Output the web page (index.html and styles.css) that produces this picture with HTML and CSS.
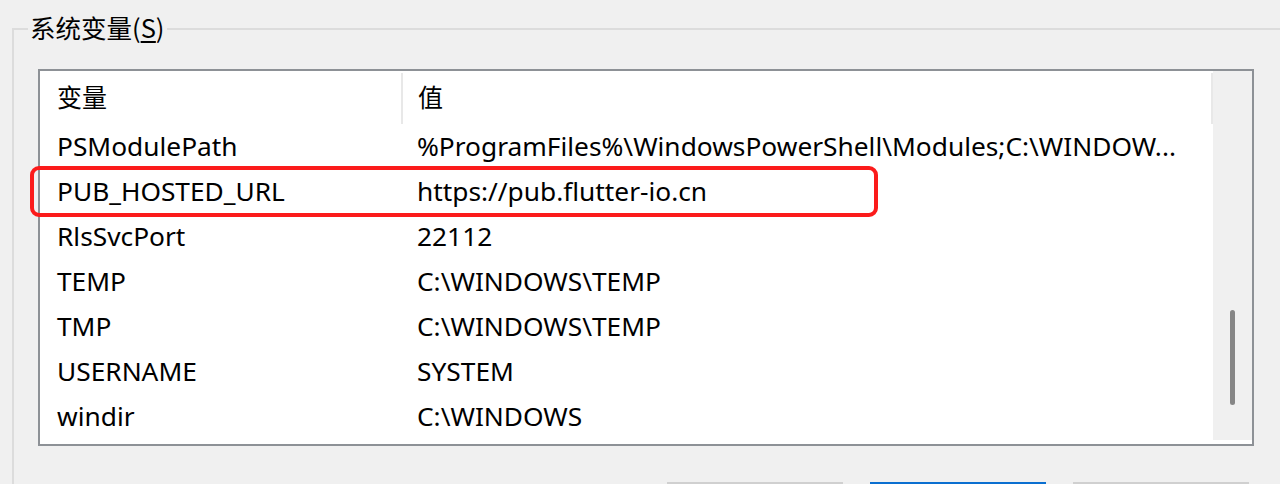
FILE: index.html
```html
<!DOCTYPE html>
<html lang="zh-CN">
<head>
<meta charset="utf-8">
<title>系统变量</title>
<link rel="stylesheet" href="styles.css">
</head>
<body>
<div class="group">
  <div class="legend">系统变量(<u>S</u>)</div>
  <div class="list">
    <div class="content">
      <div class="row head">
        <div class="c1">变量</div>
        <div class="c2">值</div>
      </div>
      <div class="row"><div class="c1">PSModulePath</div><div class="c2">%ProgramFiles%\WindowsPowerShell\Modules;C:\WINDOW...</div></div>
      <div class="row"><div class="c1">PUB_HOSTED_URL</div><div class="c2">https://pub.flutter-io.cn</div></div>
      <div class="row"><div class="c1">RlsSvcPort</div><div class="c2">22112</div></div>
      <div class="row"><div class="c1">TEMP</div><div class="c2">C:\WINDOWS\TEMP</div></div>
      <div class="row"><div class="c1">TMP</div><div class="c2">C:\WINDOWS\TEMP</div></div>
      <div class="row"><div class="c1">USERNAME</div><div class="c2">SYSTEM</div></div>
      <div class="row"><div class="c1">windir</div><div class="c2">C:\WINDOWS</div></div>
    </div>
    <div class="scrollbar"><div class="thumb"></div></div>
    <div class="highlight"></div>
  </div>
  <div class="buttons">
    <div class="btn"></div>
    <div class="btn primary"></div>
    <div class="btn"></div>
  </div>
</div>
</body>
</html>
```
FILE: styles.css
```css
html, body {
  margin: 0;
  padding: 0;
}
body {
  background: #f0f0f0;
  width: 1280px;
  height: 484px;
  overflow: hidden;
  font-family: "Noto Sans", "Noto Sans CJK SC", sans-serif;
  font-size: 26.3px;
  color: #000;
}
.group {
  margin: 28px 0 0 12px;
  width: 1320px;
  height: 456px;
  border-top: 2px solid #dcdcdc;
  border-left: 2px solid #dcdcdc;
  padding-left: 24px;
  box-sizing: border-box;
}
.legend {
  width: fit-content;
  margin: -21px 0 0 -10px;
  padding: 0 3px 0 2px;
  line-height: 36px;
  height: 36px;
  background: #f0f0f0;
  font-family: "Noto Sans CJK SC", "Noto Sans", sans-serif;
  font-size: 25.5px;
}
.legend u {
  text-decoration-thickness: 2px;
  text-underline-offset: 3px;
}
.list {
  position: relative;
  margin-top: 24px;
  width: 1216px;
  height: 377px;
  box-sizing: border-box;
  border: 2px solid #8d9196;
  background: #fff;
  display: flex;
}
.content {
  width: 1173px;
  display: flex;
  flex-direction: column;
}
.row {
  display: flex;
  height: 45px;
  align-items: center;
  white-space: nowrap;
  padding-bottom: 2px;
  box-sizing: border-box;
}
.row.head {
  height: 53px;
  padding-bottom: 0;
  font-family: "Noto Sans CJK SC", "Noto Sans", sans-serif;
  font-size: 25px;
}
.c1 {
  width: 345px;
  padding-left: 17px;
  flex: none;
}
.c2 {
  padding-left: 15px;
  flex: 1;
  overflow: hidden;
}
.row.head .c1,
.row.head .c2 {
  align-self: stretch;
  display: flex;
  align-items: center;
  margin-top: 2px;
  padding-bottom: 5px;
  border-right: 2px solid #e8e8e8;
}
.row.head .c1 {
  width: 344px;
}
.scrollbar {
  width: 39px;
  height: 369px;
  background: #f0f0f0;
  padding-top: 239px;
  box-sizing: border-box;
}
.thumb {
  margin-left: 17px;
  width: 5px;
  height: 95px;
  border-radius: 3px;
  background: #868686;
}
.highlight {
  position: absolute;
  left: -10px;
  top: 95px;
  width: 848px;
  height: 51px;
  box-sizing: border-box;
  border: 4px solid #fb1b1b;
  border-radius: 9px;
}
.buttons {
  display: flex;
  margin: 36px 0 0 629px;
  gap: 27px;
}
.btn {
  width: 176px;
  height: 46px;
  box-sizing: border-box;
  border: 2px solid #d0d0d0;
  background: #e1e1e1;
}
.btn.primary {
  border-color: #0a6fd0;
  background: #e5f1fb;
}
```
